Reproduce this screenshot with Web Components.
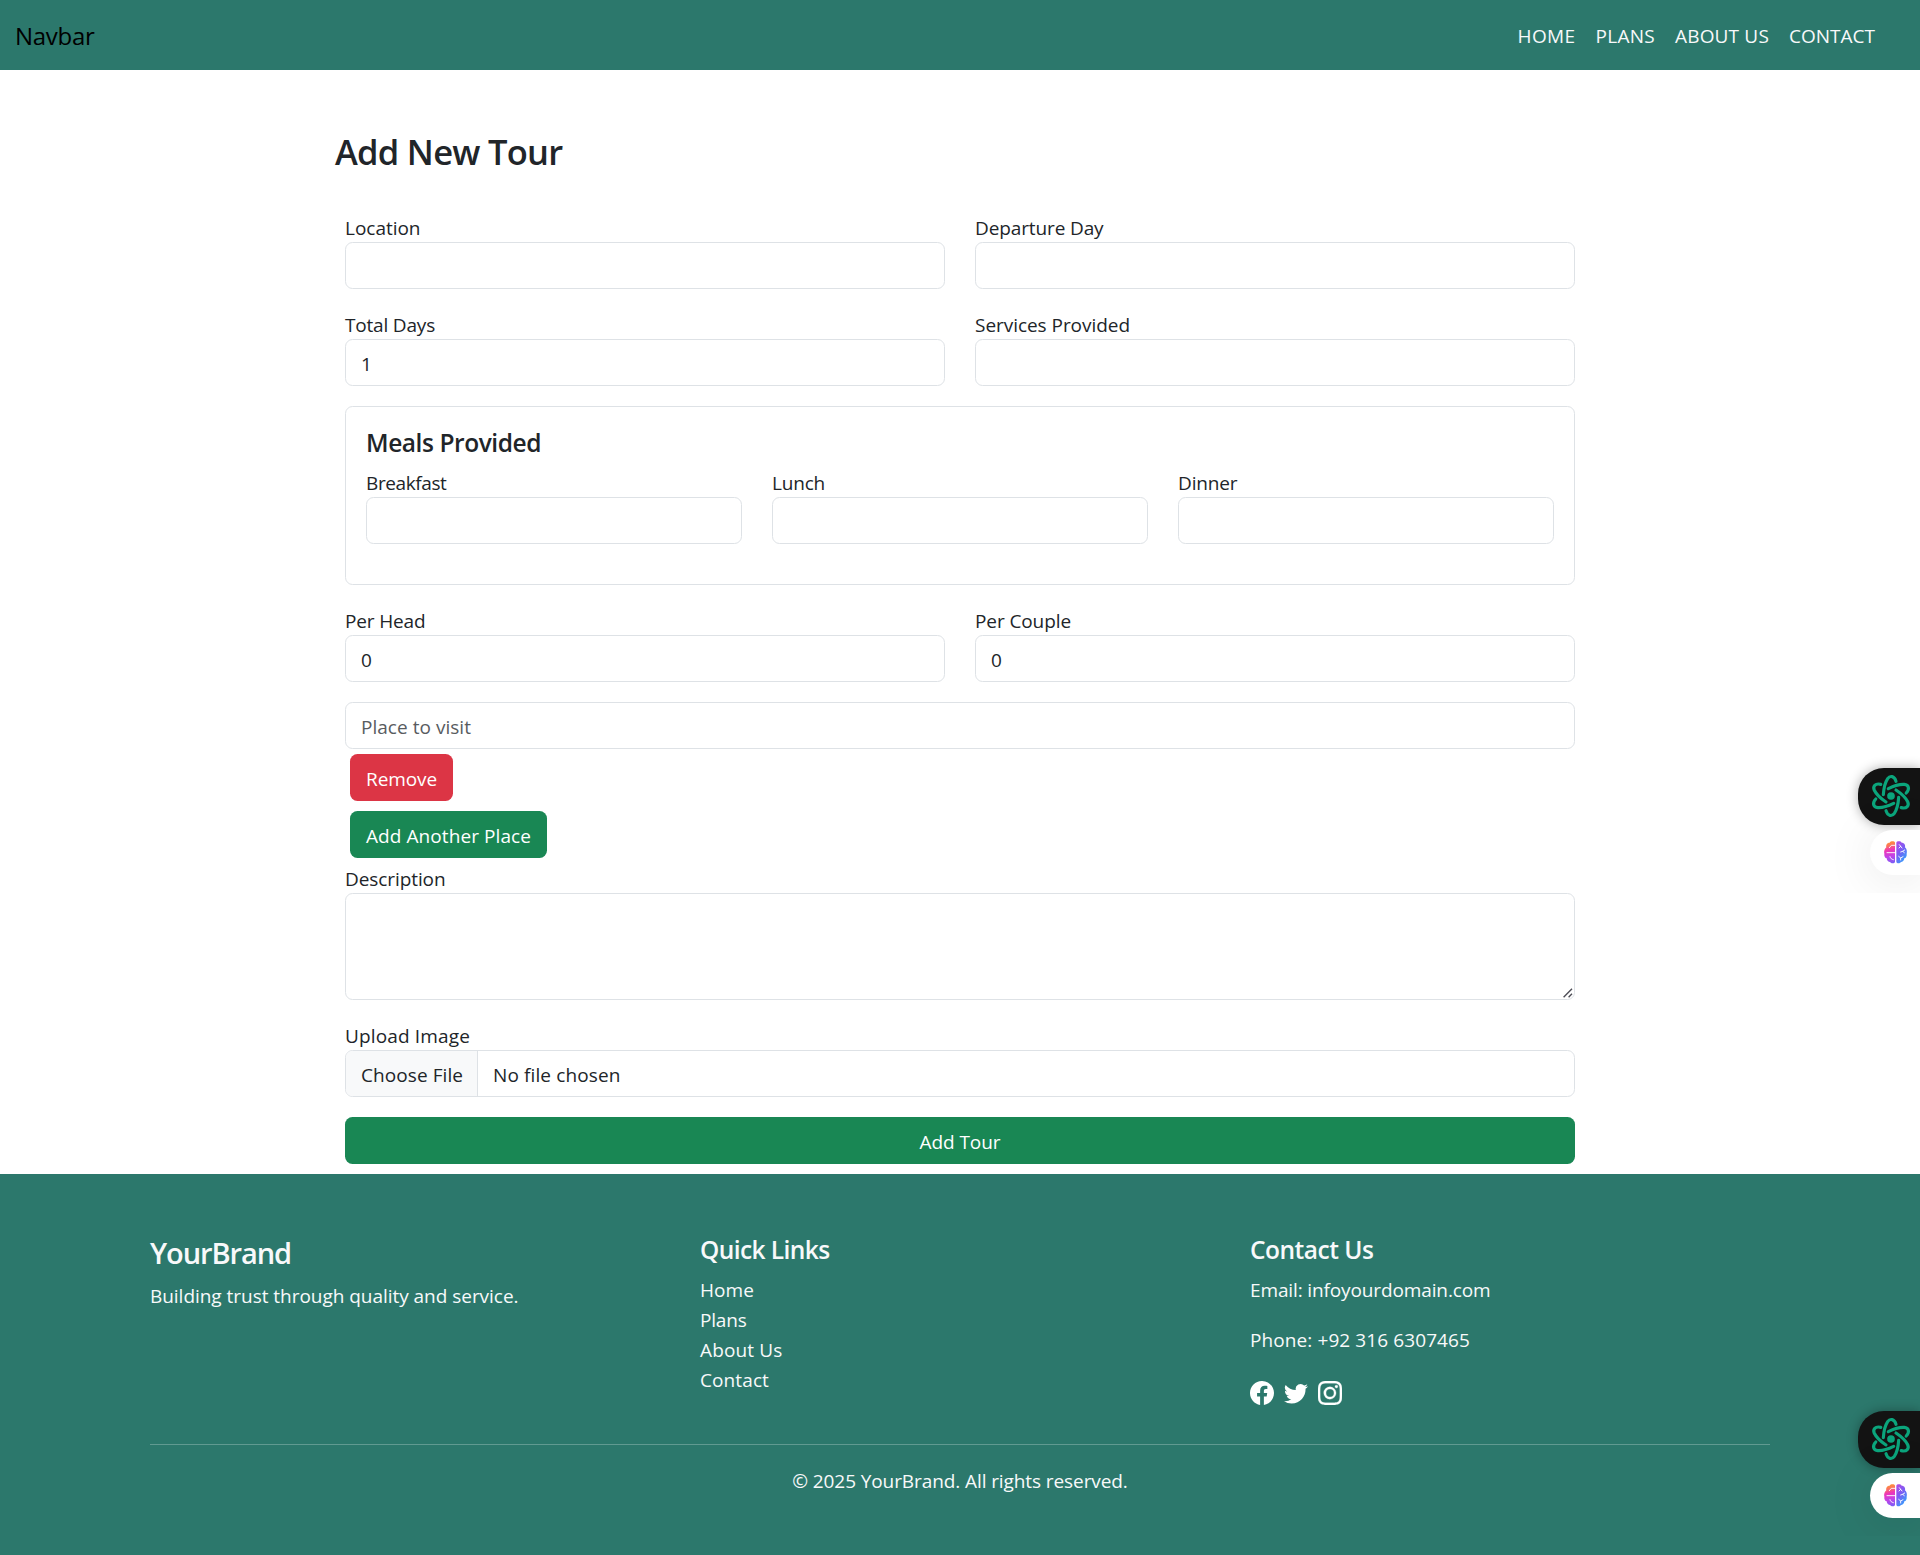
<!DOCTYPE html>
<html lang="en">
<head>
<meta charset="utf-8">
<title>Add New Tour</title>
<style>
  html, body { margin: 0; }
  body { background: #fff; color: #212529; font: 400 19px/30px "Open Sans", "Noto Sans", sans-serif; overflow-x: hidden; height: 1555px; overflow-y: hidden; }
</style>
</head>
<body>
<tour-page></tour-page>
<script>
const define = (name, html, setup) => {
  const t = document.createElement('template');
  t.innerHTML = html;
  customElements.define(name, class extends HTMLElement {
    connectedCallback() {
      if (this.shadowRoot) return;
      this.attachShadow({ mode: 'open' }).append(t.content.cloneNode(true));
      if (setup) setup(this, this.shadowRoot);
    }
  });
};

/* A single line of text tracked to a fixed measure (attribute w, in px). */
define('fit-text', `<style>
  :host { display: inline-block; white-space: nowrap; vertical-align: top; height: var(--lh, 30px); line-height: calc(var(--lh, 30px) + var(--drop, 2px)); }
  span { display: inline-block; }
</style><span><slot></slot></span>`, (el, root) => {
  const s = root.querySelector('span'), w = parseFloat(el.getAttribute('w'));
  if (!w) return;
  const n = el.textContent.length;
  s.style.letterSpacing = (w - s.getBoundingClientRect().width) / n + 'px';
  el.style.width = w + 'px';
});

define('nav-bar', `<style>
  :host { display: flex; align-items: center; justify-content: space-between; height: 70px; box-sizing: border-box; padding: 0 45px 0 15px; background: #2c786c; color: #f8f9fa; }
  .brand { color: #000; font-size: 24px; --lh: 38px; --drop: 2px; }
  nav { display: flex; gap: 20px; }
</style>
<fit-text class="brand" w="79.5">Navbar</fit-text>
<nav><fit-text w="58">HOME</fit-text><fit-text w="59.5">PLANS</fit-text><fit-text w="94">ABOUT US</fit-text><fit-text w="86">CONTACT</fit-text></nav>`);

define('form-field', `<style>
  :host { display: block; position: relative; }
  .label { display: flex; height: 30px; }
  input, textarea { display: block; box-sizing: border-box; width: 100%; margin: 0; border: 1px solid #dee2e6; border-radius: 7.5px; padding: 9px 15px 7px; height: 47px; font: inherit; color: #212529; background: #fff; outline: 0; }
  textarea { height: 107px; resize: none; }
  input::placeholder { color: #595c5f; opacity: 1; letter-spacing: var(--ph, 0); }
  .grip { position: absolute; right: 2px; bottom: 2px; width: 10px; height: 10px; stroke: #4d4d55; stroke-width: 1.4; fill: none; }
</style><div class="label"></div>`, (el, root) => {
  const lab = root.querySelector('.label');
  const text = el.getAttribute('label');
  if (text) {
    const f = document.createElement('fit-text');
    f.setAttribute('w', el.getAttribute('w'));
    f.textContent = text;
    lab.append(f);
  } else lab.remove();
  const multi = el.hasAttribute('multiline');
  const c = document.createElement(multi ? 'textarea' : 'input');
  if (el.hasAttribute('value')) c.value = el.getAttribute('value');
  if (el.hasAttribute('placeholder')) c.placeholder = el.getAttribute('placeholder');
  root.append(c);
  if (multi) c.insertAdjacentHTML('afterend', '<svg class="grip" viewBox="0 0 10 10"><path d="M.6 9.2L9 .8M5.6 9.2L9 5.8"/></svg>');
});

define('field-row', `<style>
  :host { display: grid; grid-auto-flow: column; grid-auto-columns: 1fr; gap: 30px; margin-bottom: 20px; }
</style><slot></slot>`);

define('meals-card', `<style>
  :host { display: block; border: 1px solid #dee2e6; border-radius: 7.5px; padding: 20px; margin-bottom: 20px; }
  .h { display: flex; font-size: 24.5px; font-weight: 600; margin-bottom: 10px; }
</style>
<div class="h"><fit-text w="175">Meals Provided</fit-text></div>
<field-row>
  <form-field label="Breakfast" w="80.5"></form-field>
  <form-field label="Lunch" w="53"></form-field>
  <form-field label="Dinner" w="59.5"></form-field>
</field-row>`);

define('push-button', `<style>
  :host { display: flex; width: fit-content; height: 47px; box-sizing: border-box; padding: 9px 16px; border-radius: 7.5px; background: var(--bg, #198754); color: #fff; justify-content: center; }
  :host([block]) { width: auto; }
</style><slot></slot>`);

define('file-field', `<style>
  :host { display: block; margin-bottom: 20px; }
  .label { display: flex; }
  .box { display: flex; height: 47px; box-sizing: border-box; border: 1px solid #dee2e6; border-radius: 7.5px; overflow: hidden; }
  .btn { background: #f8f9fa; padding: 8px 14px 0 15px; border-right: 1px solid #dee2e6; }
  .name { padding: 8px 15px 0; }
</style>
<div class="label"><fit-text w="125">Upload Image</fit-text></div>
<div class="box"><div class="btn"><fit-text w="102">Choose File</fit-text></div><div class="name"><fit-text w="127.5">No file chosen</fit-text></div></div>`);

define('tour-form', `<style>
  :host { display: block; width: 1230px; margin: 0 auto; padding: 60px 10px 10px; box-sizing: content-box; }
  .title { display: flex; height: 42px; margin: 0 0 40px -10px; font-size: 34.5px; font-weight: 600; --lh: 42px; }
  .btns { display: flex; flex-direction: column; gap: 10px; padding: 5px; }
  .gap { margin-bottom: 20px; }
</style>
<div class="title"><fit-text w="227.5">Add New Tour</fit-text></div>
<div class="body">
  <field-row><form-field label="Location" w="75.5"></form-field><form-field label="Departure Day" w="128.5"></form-field></field-row>
  <field-row><form-field label="Total Days" w="90" value="1"></form-field><form-field label="Services Provided" w="155"></form-field></field-row>
  <meals-card></meals-card>
  <field-row><form-field label="Per Head" w="80.5" value="0"></form-field><form-field label="Per Couple" w="96" value="0"></form-field></field-row>
  <form-field placeholder="Place to visit" style="--ph:0.03px"></form-field>
  <div class="btns">
    <push-button style="--bg:#dc3545"><fit-text w="71">Remove</fit-text></push-button>
    <push-button><fit-text w="165">Add Another Place</fit-text></push-button>
  </div>
  <form-field class="gap" label="Description" w="100.5" multiline></form-field>
  <file-field></file-field>
  <push-button block><fit-text w="81">Add Tour</fit-text></push-button>
</div>`);

define('social-links', `<style>
  :host { display: flex; gap: 10px; height: 30px; align-items: flex-start; padding-top: 7px; box-sizing: border-box; }
  svg { width: 24px; height: 24px; flex: none; fill: #fff; display: block; }
</style>
<svg viewBox="0 0 16 16"><path d="M16 8.049c0-4.446-3.582-8.05-8-8.05C3.58 0-.002 3.603-.002 8.05c0 4.017 2.926 7.347 6.75 7.951v-5.625h-2.03V8.05H6.75V6.275c0-2.017 1.195-3.131 3.022-3.131.876 0 1.791.157 1.791.157v1.98h-1.009c-.993 0-1.303.621-1.303 1.258v1.51h2.218l-.354 2.326H9.25V16c3.824-.604 6.75-3.934 6.75-7.951"/></svg>
<svg viewBox="0 0 16 16"><path d="M5.026 15c6.038 0 9.341-5.003 9.341-9.334q.002-.211-.006-.422A6.7 6.7 0 0 0 16 3.542a6.7 6.7 0 0 1-1.889.518 3.3 3.3 0 0 0 1.447-1.817 6.5 6.5 0 0 1-2.087.793A3.286 3.286 0 0 0 7.875 6.03a9.32 9.32 0 0 1-6.767-3.429 3.29 3.29 0 0 0 1.018 4.382A3.3 3.3 0 0 1 .64 6.575v.045a3.29 3.29 0 0 0 2.632 3.218 3.2 3.2 0 0 1-.865.115 3 3 0 0 1-.614-.057 3.28 3.28 0 0 0 3.067 2.277A6.6 6.6 0 0 1 .78 13.58a6 6 0 0 1-.78-.045A9.34 9.34 0 0 0 5.026 15"/></svg>
<svg viewBox="0 0 16 16"><path stroke="#fff" stroke-width=".2" d="M8 0C5.829 0 5.556.01 4.703.048 3.85.088 3.269.222 2.76.42a3.9 3.9 0 0 0-1.417.923A3.9 3.9 0 0 0 .42 2.76C.222 3.268.087 3.85.048 4.7.01 5.555 0 5.827 0 8.001c0 2.172.01 2.444.048 3.297.04.852.174 1.433.372 1.942.205.526.478.972.923 1.417.444.445.89.719 1.416.923.51.198 1.09.333 1.942.372C5.555 15.99 5.827 16 8 16s2.444-.01 3.298-.048c.851-.04 1.434-.174 1.943-.372a3.9 3.9 0 0 0 1.416-.923c.445-.445.718-.891.923-1.417.197-.509.332-1.09.372-1.942C15.99 10.445 16 10.173 16 8s-.01-2.445-.048-3.299c-.04-.851-.175-1.433-.372-1.941a3.9 3.9 0 0 0-.923-1.417A3.9 3.9 0 0 0 13.24.42c-.51-.198-1.092-.333-1.943-.372C10.443.01 10.172 0 7.998 0zm-.717 1.442h.718c2.136 0 2.389.007 3.232.046.78.035 1.204.166 1.486.275.373.145.64.319.92.599s.453.546.598.92c.11.281.24.705.275 1.485.039.843.047 1.096.047 3.231s-.008 2.389-.047 3.232c-.035.78-.166 1.203-.275 1.485a2.5 2.5 0 0 1-.599.919c-.28.28-.546.453-.92.598-.28.11-.704.24-1.485.276-.843.038-1.096.047-3.232.047s-2.39-.009-3.233-.047c-.78-.036-1.203-.166-1.485-.276a2.5 2.5 0 0 1-.92-.598 2.5 2.5 0 0 1-.6-.92c-.109-.281-.24-.705-.275-1.485-.038-.843-.046-1.096-.046-3.233s.008-2.388.046-3.231c.036-.78.166-1.204.276-1.486.145-.373.319-.64.599-.92s.546-.453.92-.598c.282-.11.705-.24 1.485-.276.738-.034 1.024-.044 2.515-.045zm4.988 1.328a.96.96 0 1 0 0 1.92.96.96 0 0 0 0-1.92m-4.27 1.122a4.109 4.109 0 1 0 0 8.217 4.109 4.109 0 0 0 0-8.217m0 1.441a2.667 2.667 0 1 1 0 5.334 2.667 2.667 0 0 1 0-5.334"/></svg>`);

define('page-footer', `<style>
  :host { display: block; box-sizing: border-box; height: 381px; padding: 60px 150px 0; background: #2c786c; color: #f8f9fa; }
  .cols { display: grid; grid-template-columns: 550px 550px 1fr; height: 190px; }
  .col { display: flex; flex-direction: column; align-items: flex-start; }
  .h { font-size: 24.5px; font-weight: 600; margin-bottom: 10px; }
  .h4 { font-size: 29px; font-weight: 600; --lh: 36px; margin-bottom: 10px; }
  .p { margin-bottom: 20px; }
  .rule { height: 1px; margin-top: 20px; background: rgba(255,255,255,.25); }
  .copy { display: flex; justify-content: center; padding-top: 20px; }
</style>
<div class="cols">
  <div class="col"><fit-text class="h4" w="141">YourBrand</fit-text><fit-text w="368.5">Building trust through quality and service.</fit-text></div>
  <div class="col"><fit-text class="h" w="129.5">Quick Links</fit-text><fit-text w="54">Home</fit-text><fit-text w="46.5">Plans</fit-text><fit-text w="82.5">About Us</fit-text><fit-text w="69">Contact</fit-text></div>
  <div class="col"><fit-text class="h" w="123.5">Contact Us</fit-text><fit-text class="p" w="240.5">Email: infoyourdomain.com</fit-text><fit-text class="p" w="220">Phone: +92 316 6307465</fit-text><social-links></social-links></div>
</div>
<div class="rule"></div>
<div class="copy"><fit-text w="335.5">© 2025 YourBrand. All rights reserved.</fit-text></div>`);

/* Side launcher that floats over the right edge of the page. */
define('side-launcher', `<style>
  :host { position: absolute; right: 0; top: var(--top); width: 120px; height: 153px; overflow: hidden; display: flex; flex-direction: column; align-items: flex-end; padding-top: 28px; box-sizing: border-box; }
  .dark, .light { display: block; flex: none; box-sizing: border-box; }
  .dark { width: 62.5px; height: 57px; background: #131313; border-radius: 26px 0 0 26px; box-shadow: 0 0 12px rgba(0,0,0,.32); }
  .light { width: 50px; height: 45px; margin-top: 5px; background: #fff; border-radius: 22.5px 0 0 22.5px; box-shadow: 0 5px 50px rgba(0,0,0,.10); }
  svg { display: block; overflow: visible; }
  .dark svg { width: 40px; height: 42px; margin: 7px 0 0 13.5px; }
  .light svg { width: 23px; height: 23px; margin: 11px 0 0 14px; }
</style>
<div class="dark"><svg viewBox="-60 -63 120 126" fill="none" stroke="#0ba57c" stroke-width="9.5" stroke-linecap="round"><circle r="11.5" fill="#0ba57c" stroke="none"/></svg></div>
<div class="light"><svg viewBox="0 0 69 69">
  <defs>
    <linearGradient id="l" gradientUnits="userSpaceOnUse" x1="8" y1="0" x2="26" y2="66"><stop offset="0" stop-color="#ff9a2e"/><stop offset=".2" stop-color="#fb7a55"/><stop offset=".42" stop-color="#ee35b8"/><stop offset=".7" stop-color="#c044e8"/><stop offset="1" stop-color="#7d5cf5"/></linearGradient>
    <linearGradient id="r" x1="0" y1="0" x2=".6" y2="1"><stop offset="0" stop-color="#b44ae6"/><stop offset=".5" stop-color="#7b5cf3"/><stop offset="1" stop-color="#35a0fb"/></linearGradient>
  </defs>
  <path fill="url(#l)" d="M33 5C32 0 20-1 17 5C9 5 5 12 7 19C2 22-1 32 1 38C0 45 3 51 8 52C8 59 14 63 18 63C22 69 32 68 33 62Z"/>
  <path fill="url(#r)" d="M37 5C38 0 50-1 53 5C61 5 65 12 63 19C68 22 70 32 68 38C69 45 66 51 61 52C61 59 55 63 51 63C47 69 38 68 37 62Z"/>
  <g fill="none" stroke="#fff" stroke-width="2.8" stroke-linecap="round"><path d="M33 13H22L16 20M9 35H33M28 56C23 55 19 52 18 47M46 11L50 16L54 21M50 16L45 21M50 33L56 31L61 35M56 31L62 27M44 46L50 51L57 47M50 51V57"/></g>
</svg></div>`, (el, root) => {
  const svg = root.querySelector('.dark svg');
  for (let i = 0; i < 6; i++) {
    const p = document.createElementNS('http://www.w3.org/2000/svg', 'path');
    p.setAttribute('d', 'M15-44C10-61-3-62-10-52C-18-40-22-20-23-4');
    p.setAttribute('transform', 'rotate(' + i * 60 + ')');
    svg.append(p);
  }
});

define('tour-page', `<style>
  :host { display: block; position: relative; height: 1555px; overflow: hidden; }
</style>
<nav-bar></nav-bar><tour-form></tour-form><page-footer></page-footer>
<side-launcher style="--top:740px"></side-launcher><side-launcher style="--top:1383px"></side-launcher>`);
</script>
</body>
</html>
